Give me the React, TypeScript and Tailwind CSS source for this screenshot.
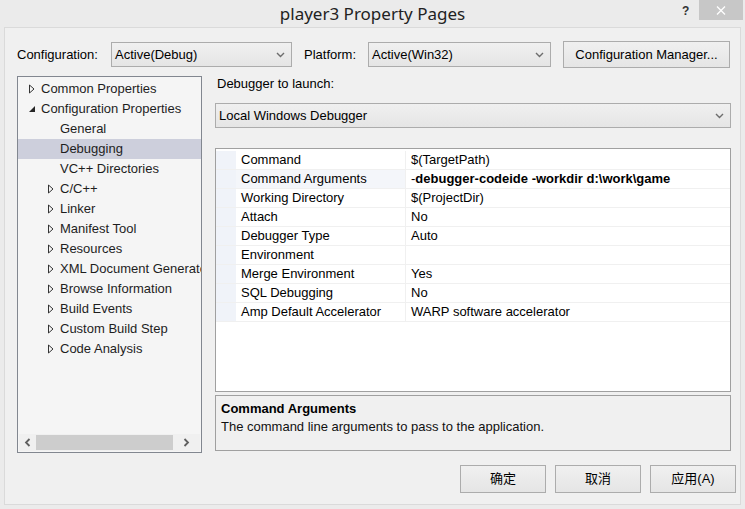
import React from "react";

const font = { fontFamily: '"Liberation Sans", "Noto Sans CJK SC", sans-serif' };

function Chevron() {
  return (
    <svg width="9" height="6" viewBox="0 0 9 6" className="shrink-0">
      <path d="M1 1 L4.5 4.5 L8 1" fill="none" stroke="#6d6d6d" strokeWidth="1.4" />
    </svg>
  );
}

function Select({ text, className }: { text: string; className: string }) {
  return (
    <div
      className={`flex items-center justify-between border border-[#acacac] bg-gradient-to-b from-[#f0f0f0] to-[#e5e5e5] pl-[3px] pr-[6px] text-[13px] text-black ${className}`}
    >
      <span>{text}</span>
      <Chevron />
    </div>
  );
}

function Arrow({ open }: { open?: boolean }) {
  if (open)
    return (
      <svg width="8" height="8" viewBox="0 0 8 8" className="shrink-0">
        <path d="M7 1 L7 7 L1 7 Z" fill="#262626" />
      </svg>
    );
  return (
    <svg width="8" height="10" viewBox="0 0 8 10" className="shrink-0">
      <path d="M1.5 1 L6 5 L1.5 9 Z" fill="none" stroke="#333" strokeWidth="1" />
    </svg>
  );
}

const tree: { label: string; indent: number; arrow?: "open" | "closed"; selected?: boolean }[] = [
  { label: "Common Properties", indent: 0, arrow: "closed" },
  { label: "Configuration Properties", indent: 0, arrow: "open" },
  { label: "General", indent: 1 },
  { label: "Debugging", indent: 1, selected: true },
  { label: "VC++ Directories", indent: 1 },
  { label: "C/C++", indent: 1, arrow: "closed" },
  { label: "Linker", indent: 1, arrow: "closed" },
  { label: "Manifest Tool", indent: 1, arrow: "closed" },
  { label: "Resources", indent: 1, arrow: "closed" },
  { label: "XML Document Generator", indent: 1, arrow: "closed" },
  { label: "Browse Information", indent: 1, arrow: "closed" },
  { label: "Build Events", indent: 1, arrow: "closed" },
  { label: "Custom Build Step", indent: 1, arrow: "closed" },
  { label: "Code Analysis", indent: 1, arrow: "closed" },
];

const props: { name: string; value: string; bold?: boolean; sel?: boolean }[] = [
  { name: "Command", value: "$(TargetPath)" },
  { name: "Command Arguments", value: "-debugger-codeide -workdir d:\\work\\game", bold: true, sel: true },
  { name: "Working Directory", value: "$(ProjectDir)" },
  { name: "Attach", value: "No" },
  { name: "Debugger Type", value: "Auto" },
  { name: "Environment", value: "" },
  { name: "Merge Environment", value: "Yes" },
  { name: "SQL Debugging", value: "No" },
  { name: "Amp Default Accelerator", value: "WARP software accelerator" },
];

export default function App() {
  return (
    <div style={font} className="w-[745px] h-[509px] bg-[#ebebeb] flex flex-col text-[13px] text-black overflow-hidden">
      {/* Title bar */}
      <div className="relative h-[27px] flex items-center justify-center shrink-0">
        <span className="text-[17px] text-[#222] leading-none" style={{ fontFamily: '"Noto Sans", "Liberation Sans", sans-serif' }}>
          player3 Property Pages
        </span>
        <span className="absolute left-[682px] top-[2px] text-[12px] font-bold text-[#333]">?</span>
        <div className="absolute left-[699px] top-0 w-[44px] h-[20px] bg-[#c7c7c7] flex items-center justify-center">
          <svg width="10" height="9" viewBox="0 0 10 9">
            <path d="M1 0.5 L9 8.5 M9 0.5 L1 8.5" stroke="#fff" strokeWidth="1.3" />
          </svg>
        </div>
      </div>

      {/* Body */}
      <div className="mx-[4px] flex-1 border border-[#dadada] bg-[#f0f0f0] flex flex-col mb-[4px]">
        {/* Config row */}
        <div className="flex items-center h-[27px] mt-[13px] pl-[12px]">
          <span className="w-[94px]">Configuration:</span>
          <Select text="Active(Debug)" className="w-[181px] h-[25px]" />
          <span className="ml-[12px] w-[64px]">Platform:</span>
          <Select text="Active(Win32)" className="w-[183px] h-[25px]" />
          <div className="ml-[12px] w-[167px] h-[27px] border border-[#acacac] bg-gradient-to-b from-[#f0f0f0] to-[#e5e5e5] flex items-center justify-center">
            Configuration Manager...
          </div>
        </div>

        <div className="flex flex-1 pl-[12px] pt-[8px]">
          {/* Tree */}
          <div className="w-[185px] h-[377px] border border-[#828790] bg-[#f5f5f5] flex flex-col overflow-hidden">
            <div className="flex-1 pt-[2px] overflow-hidden">
              {tree.map((t) => (
                <div
                  key={t.label}
                  className={`h-[20px] flex items-center whitespace-nowrap overflow-hidden ${t.selected ? "bg-[#cdcfdc]" : ""}`}
                  style={{ paddingLeft: t.indent ? 29 : 10 }}
                >
                  <span className="w-[12px] shrink-0 flex items-center">
                    {t.arrow === "open" ? <Arrow open /> : t.arrow === "closed" ? <Arrow /> : null}
                  </span>
                  <span className="pl-[1px] shrink-0 text-[#1e1e1e]">{t.label}</span>
                </div>
              ))}
            </div>
            <div className="h-[17px] mx-[1px] mb-[1px] flex items-center bg-[#f0f0f0] shrink-0">
              <span className="w-[17px] flex justify-center">
                <svg width="7" height="9" viewBox="0 0 7 9">
                  <path d="M5.5 1 L2 4.5 L5.5 8" fill="none" stroke="#606060" strokeWidth="1.8" />
                </svg>
              </span>
              <div className="w-[137px] h-[15px] bg-[#cdcdcd]" />
              <span className="flex-1 flex justify-center">
                <svg width="7" height="9" viewBox="0 0 7 9">
                  <path d="M1.5 1 L5 4.5 L1.5 8" fill="none" stroke="#606060" strokeWidth="1.8" />
                </svg>
              </span>
            </div>
          </div>

          {/* Right panel */}
          <div className="ml-[13px] w-[516px] flex flex-col">
            <div className="h-[17px] mt-[-1px] flex items-center pl-[2px]">Debugger to launch:</div>
            <Select text="Local Windows Debugger" className="mt-[11px] w-[516px] h-[25px] pl-[3px]" />

            {/* Grid */}
            <div className="mt-[20px] h-[244px] border border-[#a0a0a0] bg-white flex flex-col pt-[2px]">
              {props.map((p) => (
                <div key={p.name} className="flex h-[19px] border-b border-[#f0f0f0]">
                  <div className="w-[20px] bg-[#f0f3f9]" />
                  <div className={`w-[170px] pl-[5px] flex items-center whitespace-nowrap border-r border-[#f0f0f0] ${p.sel ? "bg-[#f4f6fa]" : ""}`}>
                    {p.name}
                  </div>
                  <div className={`flex-1 pl-[5px] flex items-center whitespace-nowrap ${p.bold ? "font-bold" : ""}`}>
                    {p.bold ? (
                      <>
                        <span className="font-normal">-</span>
                        {p.value.slice(1)}
                      </>
                    ) : (
                      p.value
                    )}
                  </div>
                </div>
              ))}
              <div className="flex-1" />
            </div>

            {/* Description */}
            <div className="mt-[3px] h-[56px] border border-[#a0a0a0] bg-[#f0f0f0] pl-[5px] pt-[4px] leading-[18px]">
              <div className="font-bold">Command Arguments</div>
              <div className="text-[#111]">The command line arguments to pass to the application.</div>
            </div>
          </div>
        </div>

        {/* Buttons */}
        <div className="flex justify-end gap-[9px] pr-[4px] pb-[11px] pt-[12px]">
          {["确定", "取消", "应用(A)"].map((b) => (
            <div
              key={b}
              className="w-[86px] h-[28px] border border-[#acacac] bg-gradient-to-b from-[#f0f0f0] to-[#e5e5e5] flex items-center justify-center"
            >
              {b}
            </div>
          ))}
        </div>
      </div>
    </div>
  );
}
